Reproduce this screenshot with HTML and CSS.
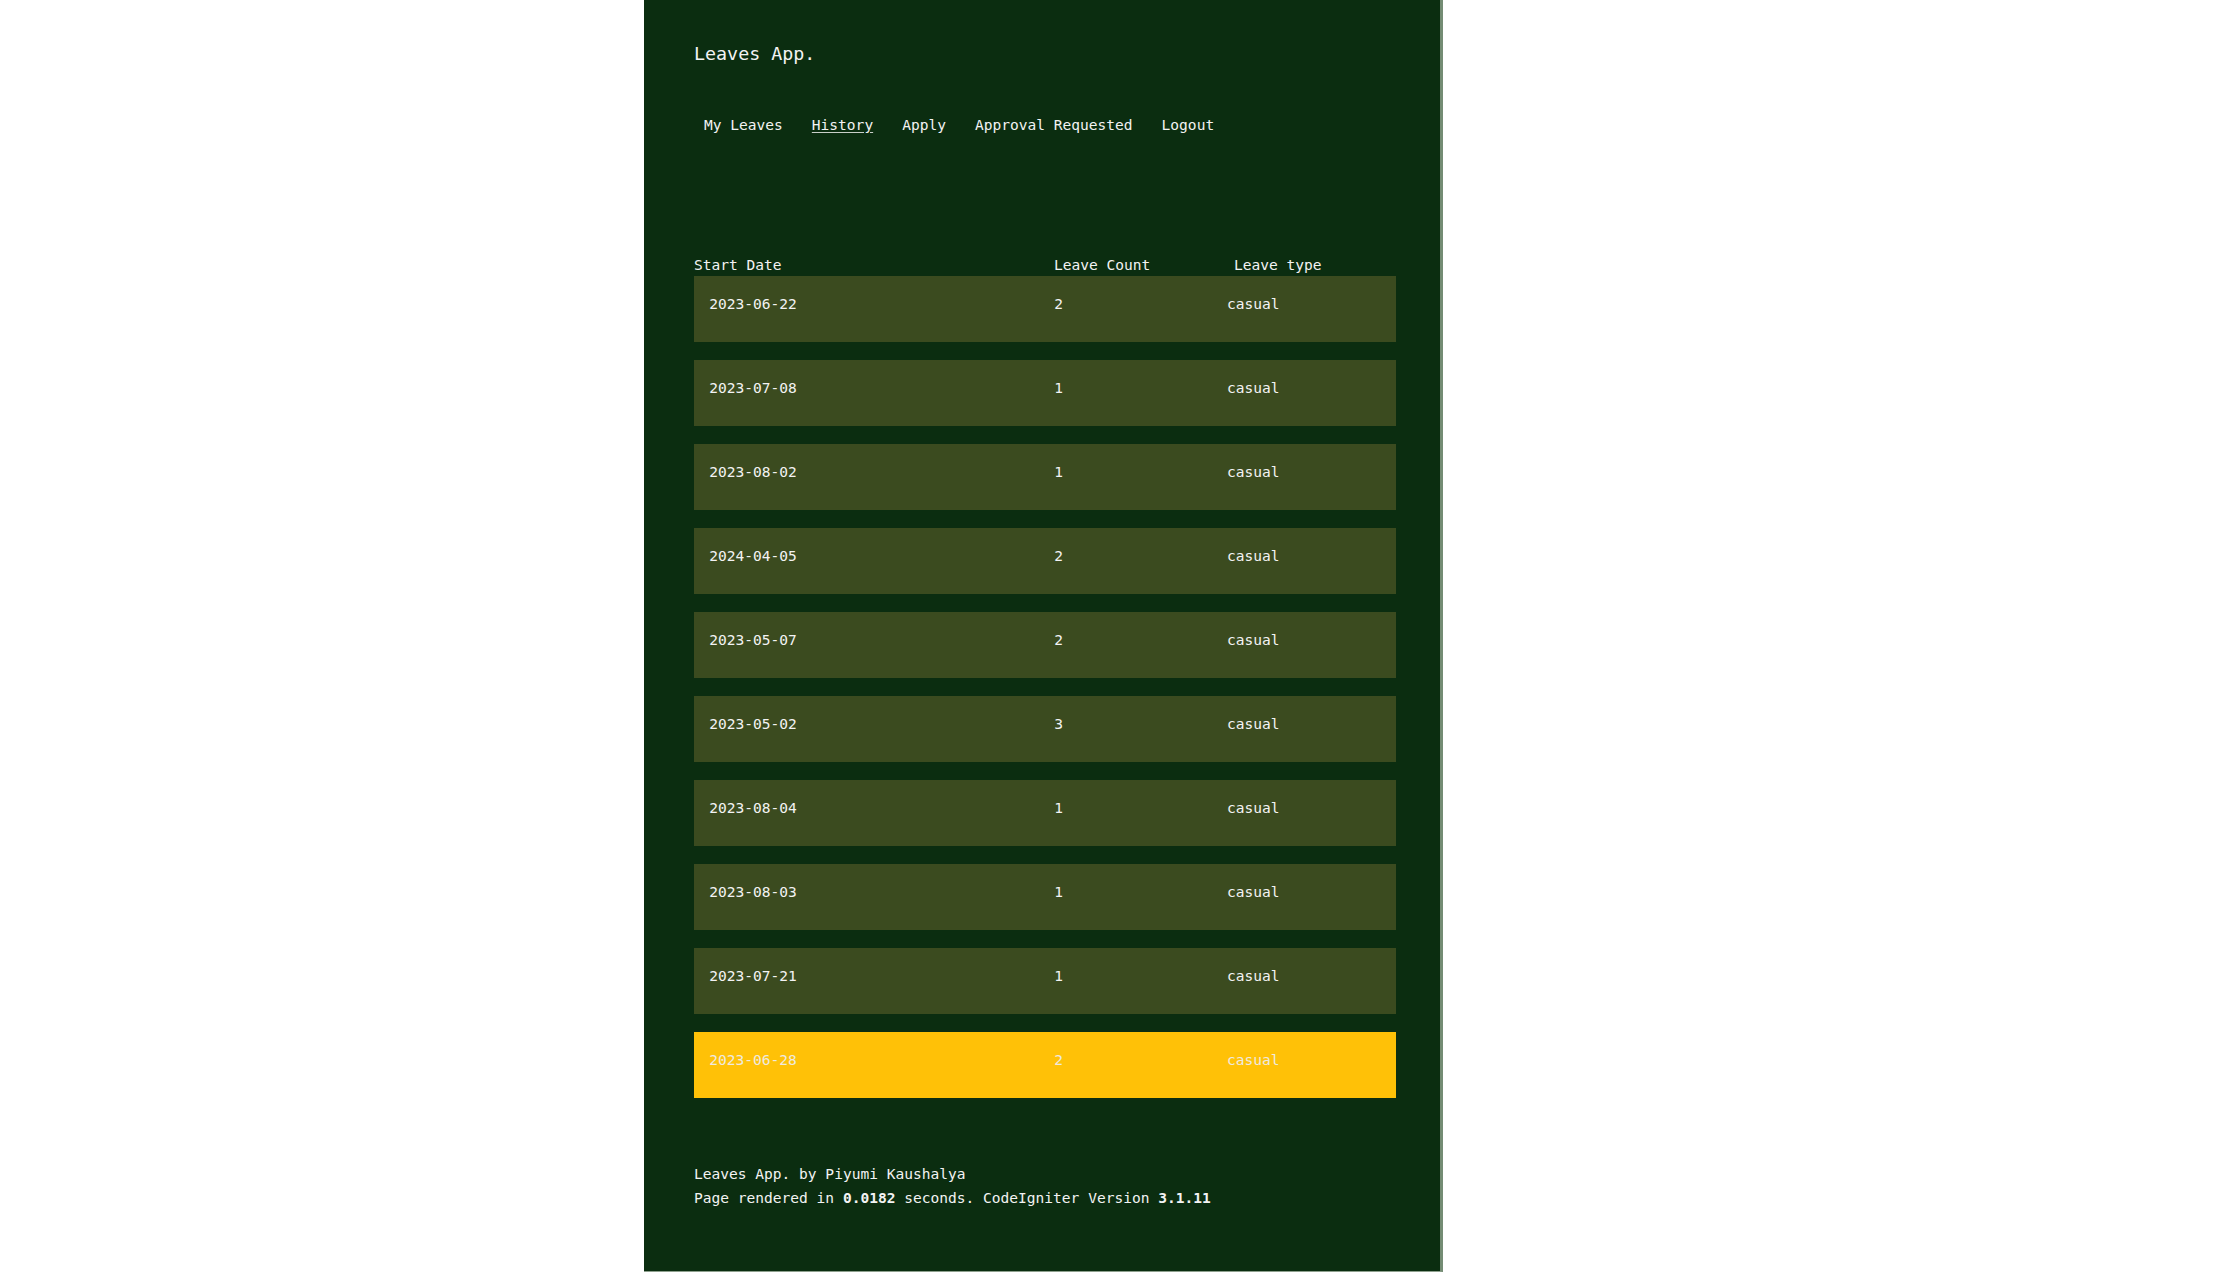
FILE: index.html
```html
<!DOCTYPE html>
<html lang="en">
<head>
<meta charset="utf-8">
<title>Leaves App.</title>
<link rel="stylesheet" href="styles.css">
</head>
<body>
<div class="panel">
  <h1 class="brand">Leaves App.</h1>
  <nav class="nav">
    <a href="#" class="nav-link">My Leaves</a>
    <a href="#" class="nav-link active">History</a>
    <a href="#" class="nav-link">Apply</a>
    <a href="#" class="nav-link">Approval Requested</a>
    <a href="#" class="nav-link">Logout</a>
  </nav>

  <div class="history">
    <div class="head">
      <span class="h-date">Start Date</span>
      <span class="h-count">Leave Count</span>
      <span class="h-type">Leave type</span>
    </div>
    <div class="row"><span class="c-date">2023-06-22</span><span class="c-count">2</span><span class="c-type">casual</span></div>
    <div class="row"><span class="c-date">2023-07-08</span><span class="c-count">1</span><span class="c-type">casual</span></div>
    <div class="row"><span class="c-date">2023-08-02</span><span class="c-count">1</span><span class="c-type">casual</span></div>
    <div class="row"><span class="c-date">2024-04-05</span><span class="c-count">2</span><span class="c-type">casual</span></div>
    <div class="row"><span class="c-date">2023-05-07</span><span class="c-count">2</span><span class="c-type">casual</span></div>
    <div class="row"><span class="c-date">2023-05-02</span><span class="c-count">3</span><span class="c-type">casual</span></div>
    <div class="row"><span class="c-date">2023-08-04</span><span class="c-count">1</span><span class="c-type">casual</span></div>
    <div class="row"><span class="c-date">2023-08-03</span><span class="c-count">1</span><span class="c-type">casual</span></div>
    <div class="row"><span class="c-date">2023-07-21</span><span class="c-count">1</span><span class="c-type">casual</span></div>
    <div class="row highlight"><span class="c-date">2023-06-28</span><span class="c-count">2</span><span class="c-type">casual</span></div>
  </div>

  <footer class="footer">
    <p>Leaves App. by Piyumi Kaushalya</p>
    <p>Page rendered in <strong>0.0182</strong> seconds. CodeIgniter Version <strong>3.1.11</strong></p>
  </footer>
</div>
</body>
</html>
```

FILE: styles.css
```css
html, body {
  margin: 0;
  padding: 0;
  background: #ffffff;
}

body {
  font-family: "DejaVu Sans Mono", "Liberation Mono", monospace;
  font-size: 14.55px;
  line-height: 20px;
  color: #f3f3f3;
}

.panel {
  margin-left: 644px;
  width: 796px;
  box-sizing: content-box;
  background: #0b2d10;
  border-right: 3px solid #748c74;
  border-bottom: 1px solid #8ea08e;
  padding: 42px 0 61px 0;
}

.brand {
  margin: 0 0 0 50px;
  font-size: 18.33px;
  line-height: 24px;
  font-weight: normal;
  color: #f3f3f3;
}

.nav {
  display: flex;
  gap: 29px;
  margin: 49px 0 0 60px;
}

.nav-link {
  color: #f3f3f3;
  text-decoration: none;
}

.nav-link.active {
  text-decoration: underline;
  text-decoration-color: #c9cfc9;
  text-underline-offset: 2px;
}

.history {
  margin: 120px 0 0 50px;
  width: 702px;
}

.head {
  display: grid;
  grid-template-columns: 360px 180px 1fr;
  margin-bottom: 1px;
}

.row {
  display: grid;
  grid-template-columns: 345px 172.7px 1fr;
  box-sizing: border-box;
  height: 66px;
  padding: 18px 0 0 15.3px;
  margin-bottom: 18px;
  background: #3b4b1f;
}

.row.highlight {
  background: #ffc107;
  color: #eeeae0;
}

.footer {
  margin: 64px 0 0 50px;
  line-height: 24px;
}

.footer p {
  margin: 0;
}

.footer strong {
  font-weight: bold;
}
```
